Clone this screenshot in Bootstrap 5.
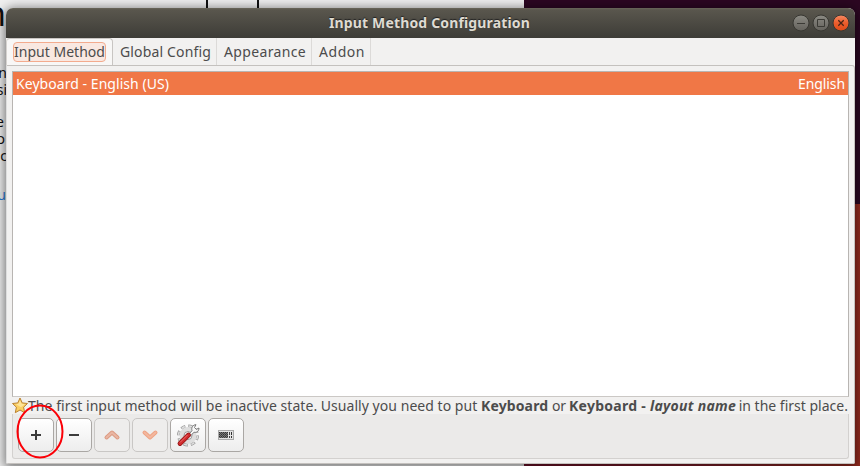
<!DOCTYPE html>
<html lang="en">
<head>
<meta charset="utf-8">
<title>Input Method Configuration</title>
<link href="https://cdn.jsdelivr.net/npm/bootstrap@5.3.0/dist/css/bootstrap.min.css" rel="stylesheet">
<style>
body{width:860px;height:466px;overflow:hidden;font-family:"Noto Sans","Open Sans",sans-serif;font-size:14px;line-height:18px;color:#4c4c4c;background:#2c0722}
.desk{position:absolute;inset:0;background:linear-gradient(#2c0722 0 204px,transparent 204px),linear-gradient(90deg,#6d1128 524px,#822029 720px,#982c1f);overflow:hidden}
.doc{position:absolute;left:0;top:0;width:524px;height:466px;background:#f0f0f0;color:#111}
.doc span{position:absolute;white-space:nowrap;right:518px;line-height:16px}
.doc .big{font-size:34px;line-height:30px;top:-2px;right:518px}
.doc i{position:absolute;top:0;height:8px;width:2px;background:#111}
.win{position:relative;width:849px;height:456px;margin:8px 0 0 6px;background:#f2f1f0;border-radius:7px 7px 2px 2px;box-shadow:0 2px 11px 2px rgba(0,0,0,.5);overflow:hidden}
.bar{height:30px;background:linear-gradient(#696659 0,#59564d 2px,#3d3c37);color:#dfdbd2;text-shadow:0 -1px 1px #222;font-weight:700;font-size:14px}
.ctl{width:18px;height:18px;display:block}
.tabs{height:27px}
.tb{height:27px;border-right:1px solid #dcdad8;padding:5px 0 0 7px;white-space:nowrap}
.tb.on{background:#f8f7f6;border:1px solid #c8c5c2;border-bottom:0;border-left-color:#d5d2cf;border-radius:4px 4px 0 0;padding:3px 0 0 6px}
.foc{border:1px solid #f3ab8e;border-radius:4px;background:#f9e8e1;display:block;height:20px;width:93px;line-height:18px}
.page{height:399px;border:1px solid #c4c1be;border-left-color:#ddd;border-radius:0 3px 2px 2px;padding:5px 5px 5px 5px}
.lst{height:326px;border:1px solid #b8b5b2;border-bottom-color:#cbc8c5;background:#fff}
.sel{height:23px;background:#f07746;color:#fff;padding:0 3px;line-height:23px}
.msg{height:17px;white-space:nowrap}
.tools{height:45px;background:#ebeae9;border:1px solid #d3d1cf;border-top:0;border-radius:0 0 3px 3px;padding:4px 5px}
.tool{width:36px;height:34px;border:1px solid #aaa7a4;border-radius:5px;background:linear-gradient(#fff,#ededed);padding:0;display:flex;align-items:center;justify-content:center}
.tool:disabled{background:#eeedec;border-color:#c9c7c5;opacity:1}
.ring{position:absolute;left:16px;top:404px}
.t{display:inline-block;white-space:nowrap}
</style>
</head>
<body>
<div class="desk"><div class="doc">
<span class="big">n</span><i style="left:206px"></i><i style="left:257px"></i>
<span style="top:65px;right:517px">n</span><span style="top:82px;right:517px">si</span><span style="top:114px;right:520px">e</span><span style="top:131px;right:519px">o</span><span style="top:148px;right:517px">c</span><span style="top:187px;color:#2a7bd8">u</span>
</div></div>
<main class="win d-flex flex-column">
<header class="bar d-flex align-items-center justify-content-end position-relative">
 <div class="flex-grow-1 text-center" style="padding-left:61px"><span class="t" data-w="201">Input Method Configuration</span></div>
 <div class="d-flex" style="gap:2px;padding-right:5px">
 <svg class="ctl" viewBox="0 0 18 18"><defs><linearGradient id="g" x2="0" y2="1"><stop stop-color="#8b8a83"/><stop offset="1" stop-color="#63615b"/></linearGradient><linearGradient id="o" x2="0" y2="1"><stop stop-color="#f58a63"/><stop offset=".5" stop-color="#ec5d2c"/><stop offset="1" stop-color="#dd4a17"/></linearGradient></defs><circle cx="9" cy="9" r="8" fill="url(#g)" stroke="#383732"/><path d="M5 9.500h8" stroke="#3b3a35"/></svg>
 <svg class="ctl" viewBox="0 0 18 18"><circle cx="9" cy="9" r="8" fill="url(#g)" stroke="#383732"/><path d="M5.500 5.500h7v7h-7z" fill="none" stroke="#3b3a35"/></svg>
 <svg class="ctl" viewBox="0 0 18 18"><circle cx="9" cy="9" r="8" fill="url(#o)" stroke="#383732"/><path d="M6.300 6.300l5.400 5.400m0-5.400l-5.400 5.400" stroke="#4a2415" stroke-width="1.300"/></svg>
 </div>
</header>
<nav class="tabs d-flex">
 <div class="tb on" style="width:107px"><span class="foc"><span class="t" data-w="91">Input Method</span></span></div>
 <div class="tb" style="width:104px"><span class="t" data-w="91">Global Config</span></div>
 <div class="tb" style="width:95px"><span class="t" data-w="82">Appearance</span></div>
 <div class="tb" style="width:59px"><span class="t" data-w="46">Addon</span></div>
</nav>
<section class="page">
 <div class="lst"><div class="sel d-flex justify-content-between"><span class="t" data-w="153">Keyboard - English (US)</span><span class="t" data-w="47">English</span></div></div>
 <div class="msg d-flex"><svg width="16" height="17" viewBox="0 0 16 17"><path d="M8 1l2.200 4.900 5.300.6-3.900 3.700 1.100 5.500L8 13l-4.700 2.700 1.100-5.500L.5 6.500l5.300-.6z" fill="#fbcf62" stroke="#b98232" stroke-linejoin="round"/><path d="M8 3.500l1.500 3.300 3.500.4-4 3-5-3 2.500-.4z" fill="#fde49a"/></svg><span class="t" data-w="453">The first input method will be inactive state. Usually you need to put&nbsp;</span><b class="t" data-w="71">Keyboard&nbsp;</b><span class="t" data-w="17">or&nbsp;</span><b class="t" data-w="81">Keyboard -&nbsp;</b><b class="t fst-italic" data-w="86">layout name</b><span class="t" data-w="113" style="margin-left:-1px">&nbsp;in the first place.</span></div>
 <div class="tools d-flex" style="gap:2px">
 <button class="tool"><svg width="16" height="16"><path d="M3 8h10M8 3v10" stroke="#3c3c3c" stroke-width="2"/></svg></button>
 <button class="tool"><svg width="16" height="16"><path d="M3 8h10" stroke="#3c3c3c" stroke-width="2"/></svg></button>
 <button class="tool" disabled><svg width="18" height="16"><path d="M3.500 10.500L9 5.500l5.500 5" fill="none" stroke="#dc9b82" stroke-width="4" stroke-linecap="round" stroke-linejoin="round"/><path d="M3.500 10.500L9 5.500l5.500 5" fill="none" stroke="#e9b6a3" stroke-width="2" stroke-linecap="round" stroke-linejoin="round"/></svg></button>
 <button class="tool" disabled><svg width="18" height="16"><path d="M3.500 5.500l5.500 5 5.500-5" fill="none" stroke="#eda384" stroke-width="4" stroke-linecap="round" stroke-linejoin="round"/><path d="M3.500 5.500l5.500 5 5.500-5" fill="none" stroke="#f3b79e" stroke-width="2" stroke-linecap="round" stroke-linejoin="round"/></svg></button>
 <button class="tool"><svg width="24" height="24" viewBox="0 0 24 24"><circle cx="12" cy="12.500" r="9.500" fill="none" stroke="#999" stroke-width="3" stroke-dasharray="4.460 3"/><circle cx="12" cy="12.500" r="9.500" fill="none" stroke="#dedede" stroke-width="1.600" stroke-dasharray="3.460 4" stroke-dashoffset="-.5"/><circle cx="12" cy="12.500" r="8.500" fill="#dedede"/><circle cx="12" cy="12.500" r="4" fill="#fff" stroke="#999"/><path d="M12.500 11.500l3.500-3.800C15 4.500 17 1.800 20 1.700L18.500 4.500l1.800 1.900L23 5c0 3.200-2.500 5-5 4.200l-3.600 3.900z" fill="#f8f8f8" stroke="#777"/><path d="M4 20.500l8.500-8.500" stroke="#8e1515" stroke-width="4.800" stroke-linecap="round"/><path d="M4 20.500l8.500-8.500" stroke="#d02a2d" stroke-width="3.300" stroke-linecap="round"/><path d="M4 19.500l7.500-7.500" stroke="#f08080" stroke-width=".8"/></svg></button>
 <button class="tool"><svg width="16" height="10" viewBox="0 0 16 10" shape-rendering="crispEdges"><path d="M.5.5h15v9H.5z" fill="#e4e4e4" stroke="#aaa"/><path d="M1 2h9v6H1z" fill="#777"/><path d="M1 2.500h9M1 4.500h9M1 6.500h9" stroke="#333" stroke-dasharray="1 1"/><path d="M2 3.500h8M2 5.500h8M2 7.500h8" stroke="#444" stroke-dasharray="1 1"/><path d="M11.500 2v3m0 1v2" stroke="#444"/><path d="M13.500 2v3m0 1v2" stroke="#333"/></svg></button>
 </div>
</section>
</main>
<svg class="ring" width="48" height="56"><ellipse cx="24" cy="27.500" rx="22.500" ry="26" fill="none" stroke="#fb0007" stroke-width="2"/></svg>
<script src="https://cdn.jsdelivr.net/npm/bootstrap@5.3.0/dist/js/bootstrap.bundle.min.js"></script>
<script>
// Track each label so that it fills its intended width.
document.querySelectorAll('.t').forEach(function(e){
 var n=e.textContent.length,w=e.getBoundingClientRect().width;
 e.style.letterSpacing=((+e.dataset.w-w)/n)+'px';
});
</script>
</body>
</html>
